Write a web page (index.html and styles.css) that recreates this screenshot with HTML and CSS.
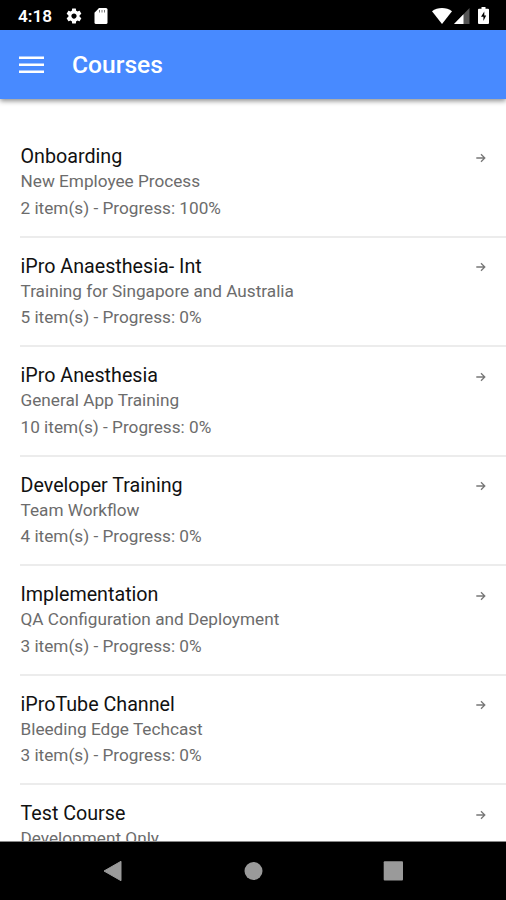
FILE: index.html
```html
<!DOCTYPE html>
<html lang="en">
<head>
  <meta charset="UTF-8" />
  <meta name="viewport" content="width=device-width, initial-scale=1.0" />
  <title>Courses</title>
  <link rel="stylesheet" href="styles.css">
</head>
<body>
  <div class="status-bar">
    <span class="clock">4:18</span>
    <svg class="gear" width="18" height="18" viewBox="0 0 24 24"><path fill="#fff" d="M19.43 12.98c.04-.32.07-.64.07-.98s-.03-.66-.07-.98l2.11-1.65c.19-.15.24-.42.12-.64l-2-3.46c-.12-.22-.39-.3-.61-.22l-2.49 1c-.52-.4-1.08-.73-1.69-.98l-.38-2.65A.488.488 0 0 0 14 2h-4c-.25 0-.46.18-.49.42l-.38 2.65c-.61.25-1.17.59-1.69.98l-2.49-1c-.23-.09-.49 0-.61.22l-2 3.46c-.13.22-.07.49.12.64l2.11 1.65c-.04.32-.07.65-.07.98s.03.66.07.98l-2.11 1.65c-.19.15-.24.42-.12.64l2 3.46c.12.22.39.3.61.22l2.49-1c.52.4 1.08.73 1.69.98l.38 2.65c.03.24.24.42.49.42h4c.25 0 .46-.18.49-.42l.38-2.65c.61-.25 1.17-.59 1.69-.98l2.49 1c.23.09.49 0 .61-.22l2-3.46c.12-.22.07-.49-.12-.64l-2.11-1.65zM12 15.5c-1.93 0-3.5-1.57-3.5-3.5s1.57-3.5 3.5-3.5 3.5 1.57 3.5 3.5-1.57 3.5-3.5 3.5z"/></svg>
    <svg class="sd-card" width="14" height="16" viewBox="0 0 14 16"><path fill="#fff" d="M5 0h7a1.500 1.500 0 0 1 1.500 1.500v13A1.500 1.500 0 0 1 12 16H2a1.500 1.500 0 0 1-1.500-1.500V4.700z"/><path stroke="#777" stroke-width="1" d="M5.500 2v2.500M8 2v2.500M10.500 2v2.500"/></svg>
    <div class="status-right">
      <svg width="20" height="16" viewBox="0 0 20 16"><path fill="#fff" d="M0 3.300C5.500-1 14.500-1 20 3.300L10 16z"/></svg>
      <svg class="signal" width="16" height="16" viewBox="0 0 16 16"><path fill="#555" d="M15.500 0v16H0z"/><path fill="#fff" d="M9.500 6.200V16H0z"/></svg>
      <svg width="11" height="17" viewBox="0 0 11 17"><path fill="#fff" d="M3.500 0h4v1.700H10a1 1 0 0 1 1 1V16a1 1 0 0 1-1 1H1a1 1 0 0 1-1-1V2.700a1 1 0 0 1 1-1h2.500z"/><path fill="#000" d="M6.300 4.500 3 9.800h2.400v4.200L8.200 8.500H6.300z"/></svg>
    </div>
  </div>

  <header class="toolbar">
    <svg width="25" height="18" viewBox="0 0 25 18"><path stroke="#fff" stroke-width="2.400" d="M0 1.800h25M0 8.800h25M0 15.800h25"/></svg>
    <h1>Courses</h1>
  </header>

  <main>
    <ul class="course-list" id="courseList"></ul>
  </main>

  <nav class="nav-bar">
    <svg width="20" height="22" viewBox="0 0 20 22"><path fill="#9a9a9a" stroke="#9a9a9a" stroke-linejoin="round" d="M2 11 19 1.300v19.400z"/></svg>
    <svg width="20" height="20" viewBox="0 0 20 20"><circle cx="10.500" cy="10" r="9" fill="#9a9a9a"/></svg>
    <svg width="20" height="20" viewBox="0 0 20 20"><rect x=".7" y=".3" width="19.300" height="19.300" rx="1" fill="#9a9a9a"/></svg>
  </nav>

  <script>
    const courses = [
      { name: "Onboarding", about: "New Employee Process", items: 2, progress: 100 },
      { name: "iPro Anaesthesia- Int", about: "Training for Singapore and Australia", items: 5, progress: 0 },
      { name: "iPro Anesthesia", about: "General App Training", items: 10, progress: 0 },
      { name: "Developer Training", about: "Team Workflow", items: 4, progress: 0 },
      { name: "Implementation", about: "QA Configuration and Deployment", items: 3, progress: 0 },
      { name: "iProTube Channel", about: "Bleeding Edge Techcast", items: 3, progress: 0 },
      { name: "Test Course", about: "Development Only" }
    ];

    document.getElementById('courseList').innerHTML = courses.map(c => `
      <li class="course">
        <div>
          <h2>${c.name}</h2>
          <p>${c.about}</p>
          ${c.items ? `<p>${c.items} item(s) - Progress: ${c.progress}%</p>` : ''}
        </div>
        <svg class="arrow" width="10" height="10" viewBox="0 0 10 10"><path fill="none" stroke="#777" stroke-width="1.300" d="M.3 5h8.500M5 1.200 8.800 5 5 8.800"/></svg>
      </li>
    `).join('');
  </script>
</body>
</html>
```

FILE: styles.css
```css
* {
  box-sizing: border-box;
}

body {
  margin: 0;
  height: 900px;
  display: flex;
  flex-direction: column;
  overflow: hidden;
  font-family: Roboto, sans-serif;
  background: #fff;
}

svg {
  display: block;
  flex-shrink: 0;
}

.status-bar {
  flex: 0 0 30px;
  display: flex;
  align-items: center;
  padding: 1px 17px 0 18px;
  background: #000;
  color: #fff;
}

.clock {
  width: 34px;
  font-size: 17.2px;
  font-weight: 600;
  line-height: 28px;
}

.gear {
  margin-left: 13px;
}

.sd-card {
  margin-left: 11px;
}

.status-right {
  display: flex;
  align-items: center;
  margin-left: auto;
}

.signal {
  margin: 0 8px 0 2px;
}

.toolbar {
  flex: 0 0 69px;
  display: flex;
  align-items: center;
  gap: 28px;
  padding-left: 19px;
  background: #488aff;
  color: #fff;
  box-shadow: 0 2px 5px rgba(0,0,0,0.45);
  z-index: 1;
}

.toolbar h1 {
  margin: 0;
  font-size: 24.6px;
  font-weight: 500;
}

main {
  flex: 1;
  min-height: 0;
  overflow: hidden;
  padding-top: 29px;
  border-bottom: 1px solid #888;
}

.course-list {
  margin: 0;
  padding: 0 0 0 20px;
  list-style: none;
}

.course {
  display: flex;
  justify-content: space-between;
  height: 109.5px;
  padding: 16px 20px 0 0.5px;
  border-bottom: 2px solid #ececec;
}

.course h2 {
  margin: 0;
  font-size: 19.7px;
  font-weight: 400;
  line-height: 25px;
  color: #111;
}

.course p {
  margin: 0 0 1px;
  font-size: 17.2px;
  line-height: 25.8px;
  color: #6c6c6c;
}

.arrow {
  margin-top: 8.5px;
}

.nav-bar {
  flex: 0 0 58px;
  display: flex;
  justify-content: space-between;
  align-items: center;
  padding: 0 103px 0 102px;
  background: #000;
}
```
